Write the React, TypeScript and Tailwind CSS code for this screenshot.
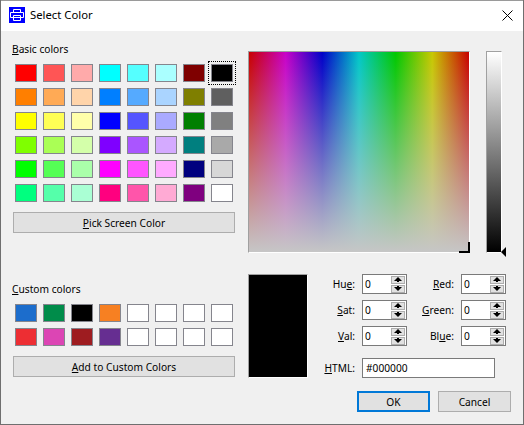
import React from "react";

const basicColors = [
  ["#ff0000", "#ff5555", "#ffaaaa", "#00ffff", "#55ffff", "#aaffff", "#7f0000", "#000000"],
  ["#ff7f00", "#ffaa55", "#ffd4aa", "#007fff", "#55aaff", "#aad4ff", "#7f7f00", "#5f5f5f"],
  ["#ffff00", "#ffff55", "#ffffaa", "#0000ff", "#5555ff", "#aaaaff", "#007f00", "#808080"],
  ["#7fff00", "#aaff55", "#d4ffaa", "#7f00ff", "#aa55ff", "#d4aaff", "#007f7f", "#a9a9a9"],
  ["#00ff00", "#55ff55", "#aaffaa", "#ff00ff", "#ff55ff", "#ffaaff", "#00007f", "#d7d7d7"],
  ["#00ff7f", "#55ffaa", "#aaffd4", "#ff007f", "#ff55aa", "#ffaad4", "#7f007f", "#ffffff"],
].flat();

const customColors = [
  "#1c6dcc", "#008c4a", "#000000", "#f78022", "#ffffff", "#ffffff", "#ffffff", "#ffffff",
  "#ed2e33", "#dc45b4", "#9e1c20", "#662e91", "#ffffff", "#ffffff", "#ffffff", "#ffffff",
];

const Swatch = ({ color, selected }: { color: string; selected?: boolean }) => (
  <div
    className={
      "h-[18px] w-[22px] border border-[#85858d] " +
      (selected ? "outline-1 outline-offset-2 outline-dotted outline-black" : "")
    }
    style={{ backgroundColor: color }}
  />
);

const DialogButton = ({ children, className = "" }: { children: React.ReactNode; className?: string }) => (
  <button className={"flex items-center justify-center bg-[#e1e1e1] text-black " + className}>
    {children}
  </button>
);

const SpinBox = () => (
  <div className="flex h-[20px] w-[45px] items-center justify-between border border-[#7a7a7a] bg-white pl-[2px] pr-[1px]">
    <span>0</span>
    <div className="flex flex-col gap-[1px]">
      <div className="flex h-[8px] w-[14px] items-center justify-center border border-[#adadad] bg-[#e1e1e1]">
        <svg width="8" height="5" viewBox="0 0 8 5">
          <path d="M4 0L8 4H5V5H3V4H0Z" fill="#000" />
        </svg>
      </div>
      <div className="flex h-[8px] w-[14px] items-center justify-center border border-[#adadad] bg-[#e1e1e1]">
        <svg width="8" height="5" viewBox="0 0 8 5">
          <path d="M4 5L8 1H5V0H3V1H0Z" fill="#000" />
        </svg>
      </div>
    </div>
  </div>
);

const FieldLabel = ({ children }: { children: React.ReactNode }) => (
  <div className="flex h-[20px] items-center justify-end">
    <span>{children}</span>
  </div>
);

export default function App() {
  return (
    <div className="flex h-[425px] w-[524px] flex-col overflow-hidden border-b border-l border-r border-[#6f6f6f] bg-[#f0f0f0] font-['Noto_Sans',sans-serif] text-[10.2px] leading-[16px] text-black">
      {/* Title bar */}
      <div className="flex h-[31px] shrink-0 items-center border-t border-[#9a9a9a] bg-white pb-[2px] pl-[8px] pr-[10px]">
        <svg width="16" height="16" viewBox="0 0 16 16">
          <rect width="16" height="16" fill="#0000ff" />
          <path d="M4.5 5.5V2.5H11.5V5.5M1.5 10.5V5.5H14.5V10.5H1.5M4.5 8.5H11.5V13.5H4.5Z" fill="none" stroke="#fff" />
        </svg>
        <span className="ml-[5px] text-[11.3px]">Select Color</span>
        <svg className="ml-auto" width="11" height="11" viewBox="0 0 11 11">
          <path d="M0.5 0.5L10.5 10.5M10.5 0.5L0.5 10.5" stroke="#000" strokeWidth="1" />
        </svg>
      </div>

      <div className="flex">
        {/* Left column */}
        <div className="ml-[12px] flex w-[222px] flex-col pt-[10px]">
          <div className="-ml-[1px]">
            <u>B</u>asic colors
          </div>
          <div className="mt-[7px] grid grid-cols-[repeat(8,22px)] gap-[6px] pl-[2px]">
            {basicColors.map((c, i) => (
              <Swatch key={i} color={c} selected={i === 7} />
            ))}
          </div>
          <DialogButton className="mt-[10px] h-[21px] w-full border border-[#adadad]">
            <span>
              <u>P</u>ick Screen Color
            </span>
          </DialogButton>

          <div className="-ml-[1px] mt-[48px]">
            <u>C</u>ustom colors
          </div>
          <div className="mt-[7px] grid grid-cols-[repeat(8,22px)] gap-[6px] pl-[2px]">
            {customColors.map((c, i) => (
              <Swatch key={i} color={c} />
            ))}
          </div>
          <DialogButton className="mt-[10px] h-[21px] w-full border border-[#adadad]">
            <span>
              <u>A</u>dd to Custom Colors
            </span>
          </DialogButton>
        </div>

        {/* Right column */}
        <div className="ml-[13px] flex flex-col pt-[20px]">
          <div className="flex">
            <div className="relative h-[202px] w-[222px] border border-b-white border-l-[#a0a0a0] border-r-white border-t-[#a0a0a0]">
              <div className="h-full w-full bg-[linear-gradient(to_bottom,rgba(198,198,198,0),#c6c6c6),linear-gradient(to_right,#c80000,#c800c8,#0000c8,#00c8c8,#00c800,#c8c800,#c80000)]" />
              <div className="absolute bottom-[-1px] right-[-1px] h-[11px] w-[11px] border-b-2 border-r-2 border-black" />
            </div>
            <div className="relative ml-[16px] h-[202px] w-[16px] border border-b-white border-l-[#a0a0a0] border-r-white border-t-[#a0a0a0]">
              <div className="h-full w-full bg-[linear-gradient(to_bottom,#ffffff,#000000)]" />
              <svg className="absolute bottom-[-5px] right-[-6px]" width="6" height="10" viewBox="0 0 6 10">
                <path d="M0 5L5 0V10Z" fill="#000" />
              </svg>
            </div>
          </div>

          <div className="mt-[21px] flex">
            <div className="h-[104px] w-[60px] border border-b-white border-l-[#a0a0a0] border-r-white border-t-[#a0a0a0] bg-black" />
            <div className="flex flex-col">
              <div className="grid grid-cols-[47px_45px_40px_45px] gap-x-[7px] gap-y-[6px]">
                <FieldLabel>Hu<u>e</u>:</FieldLabel>
                <SpinBox />
                <FieldLabel><u>R</u>ed:</FieldLabel>
                <SpinBox />
                <FieldLabel><u>S</u>at:</FieldLabel>
                <SpinBox />
                <FieldLabel><u>G</u>reen:</FieldLabel>
                <SpinBox />
                <FieldLabel><u>V</u>al:</FieldLabel>
                <SpinBox />
                <FieldLabel>Bl<u>u</u>e:</FieldLabel>
                <SpinBox />
              </div>
              <div className="mt-[12px] flex gap-[7px]">
                <div className="w-[47px]">
                  <FieldLabel><u>H</u>TML:</FieldLabel>
                </div>
                <div className="flex h-[20px] w-[133px] items-center border border-[#7a7a7a] bg-white pl-[3px]">
                  #000000
                </div>
              </div>
            </div>
          </div>

          <div className="mt-[13px] flex gap-[8px] pl-[109px]">
            <DialogButton className="h-[21px] w-[73px] border-2 border-[#0078d7]">OK</DialogButton>
            <DialogButton className="h-[21px] w-[73px] border border-[#adadad]">Cancel</DialogButton>
          </div>
        </div>
      </div>
    </div>
  );
}
